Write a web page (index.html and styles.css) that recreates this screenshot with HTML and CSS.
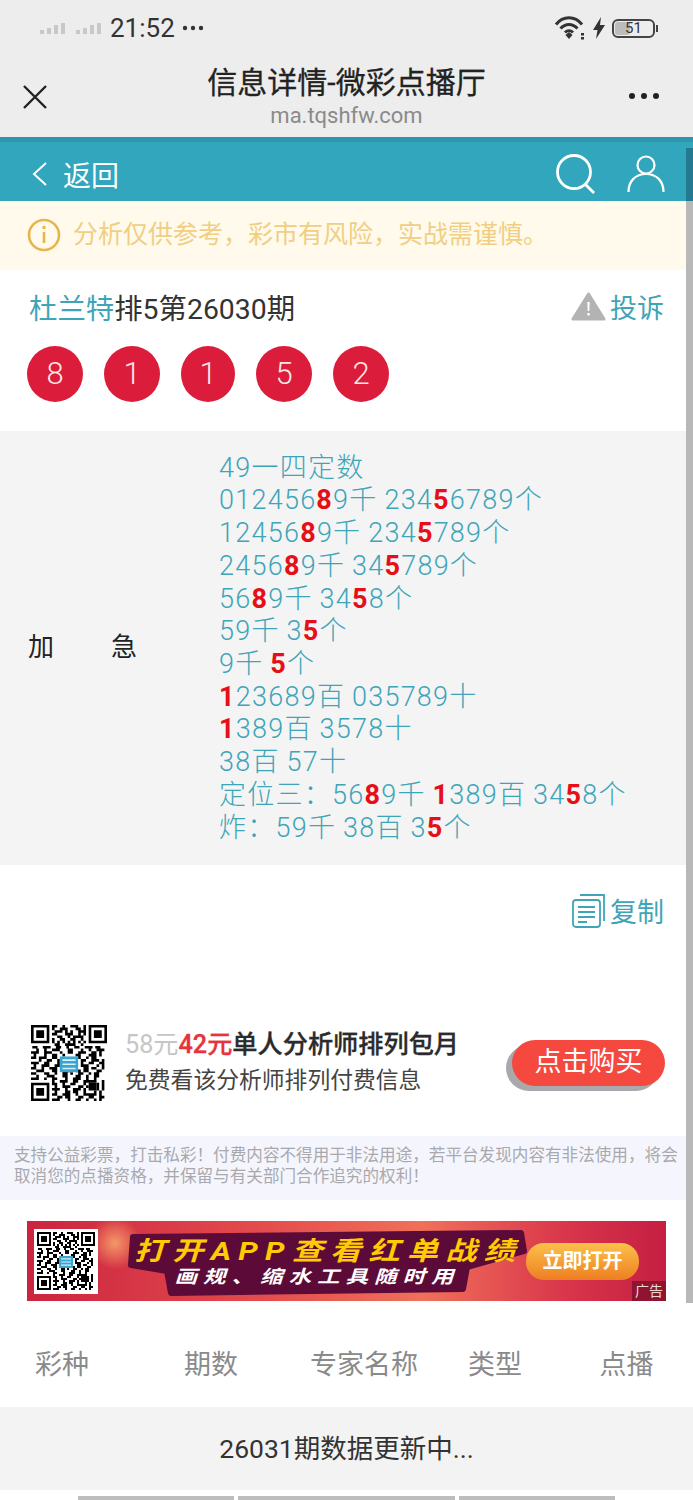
FILE: index.html
```html
<!DOCTYPE html>
<html lang="en">
<head>
  <meta charset="UTF-8">
  <title>信息详情-微彩点播厅</title>
  <link rel="stylesheet" href="styles.css">
</head>
<body>
<svg class="defs" width="0" height="0">
  <symbol id="qr" viewBox="0 0 29 29">
    <path fill="none" stroke="#000" d="M.5 .5h6v6h-6zM22.5 .5h6v6h-6zM.5 22.5h6v6h-6z"/>
    <path d="M2 2h3v3h-3zM24 2h3v3h-3zM2 24h3v3h-3zM22 22h3v3h-3z"/>
    <path fill="none" stroke="#000" d="M8 .5h2m2 0h1m2 0h3m2 0h1M8 1.5h1m2 0h3m3 0h2m1 0h1M9 2.5h3m1 0h1m1 0h1m2 0h3M8 3.5h2m3 0h3m2 0h1m1 0h1M10 4.5h2m2 0h1m1 0h4M8 5.5h1m2 0h2m2 0h2m2 0h1M8 6.5h1m1 0h1m1 0h1m1 0h1m1 0h1m1 0h1m1 0h1M9 7.5h2m2 0h4m2 0h1M.5 8.5h2m2 0h3m2 0h2m2 0h1m2 0h2m2 0h3m1 0h2M2 9.5h1m2 0h1m2 0h3m3 0h2m3 0h1m2 0h1m2 0h3M0 10.5h3m2 0h3m3 0h1m2 0h2m2 0h3m2 0h2m1 0h1M1 11.5h1m3 0h1m2 0h2m2 0h1m4 0h2m3 0h3m1 0h1M0 12.5h2m1 0h3m2 0h2m8 0h1m2 0h1m1 0h2M3 13.5h1m2 0h2m2 0h1m8 0h2m2 0h3m1 0h1M0 14.5h3m2 0h2m3 0h1m8 0h1m2 0h2m2 0h2M1 15.5h1m2 0h3m2 0h2m8 0h3m3 0h1m1 0h1M0 16.5h2m2 0h1m2 0h3m10 0h2m1 0h2m2 0h1M2 17.5h3m3 0h2m2 0h3m2 0h2m1 0h2m3 0h2M0 18.5h2m3 0h2m2 0h1m2 0h2m1 0h1m2 0h2m2 0h1m1 0h2M2 19.5h1m3 0h3m3 0h2m3 0h2m2 0h1m2 0h2M0 20.5h3m2 0h1m2 0h2m3 0h1m2 0h3m2 0h1m2 0h1M8 21.5h1m2 0h3m2 0h2m2 0h5m2 0h1M8 22.5h2m2 0h1m2 0h2m3 0h1m4 0h1m1 0h1M9 23.5h1m2 0h3m3 0h2m1 0h1m3 0h1m1 0h1M8 24.5h3m2 0h1m2 0h3m1 0h1m4 0h1m1 0h1M9 25.5h1m3 0h2m1 0h2m2 0h1m3 0h1m1 0h1M8 26.5h2m2 0h3m2 0h1m2 0h5m1 0h1M10 27.5h2m1 0h2m3 0h2m2 0h2m2 0h2M8 28.5h3m3 0h1m2 0h2m2 0h1m2 0h1m1 0h1"/>
    <rect x="11" y="12" width="7" height="6" fill="#39a6cf"/>
    <path fill="none" stroke="#d6f1fa" stroke-width=".6" d="M12 13.4h5M12 15h5M12 16.6h5"/>
  </symbol>
</svg>

<div class="scrollbar"><div class="thumb-top"></div></div>

<header class="wechat-bar">
  <div class="status">
    <div class="status-left">
      <svg class="signal" width="63" height="12" viewBox="0 0 63 12">
        <path fill="#c8c8c8" d="M0 8h4v4H0zM7 6h4v6H7zM14 3h4v9h-4zM21 1h4v11h-4zM36 8h4v4h-4zM43 6h4v6h-4zM50 3h4v9h-4zM57 1h4v11h-4z"/>
      </svg>
      <span class="clock">21:52</span>
      <svg class="status-dots" width="22" height="6" viewBox="0 0 22 6" fill="#333"><circle cx="3" cy="3" r="2.200"/><circle cx="11" cy="3" r="2.200"/><circle cx="19" cy="3" r="2.200"/></svg>
    </div>
    <div class="status-right">
      <svg width="32" height="24" viewBox="0 0 32 24" fill="none" stroke="#333" stroke-width="3">
        <path d="M2 8.500C9-.5 21-.5 28 8.500M6.500 12.500C11.500 7 18.500 7 23.500 12.500M11 16.500c2.500-2.500 5.500-2.500 8 0"/>
        <path fill="#333" stroke="none" d="M11.500 19l3.500-3 3.500 3-3.500 4zM27 17h3v2.500h-3zM27 21h3v2.500h-3z"/>
      </svg>
      <svg width="12" height="22" viewBox="0 0 12 22"><path fill="#333" d="M8 0L0 13h4.500L3 22l9-14H7z"/></svg>
      <div class="battery"><span class="battery-fill"></span><span class="battery-num">51</span></div>
    </div>
  </div>
  <div class="title-row">
    <svg class="close" width="26" height="26" viewBox="0 0 26 26" fill="none" stroke="#222" stroke-width="2.400"><path d="M2 2l22 22M24 2L2 24"/></svg>
    <div class="title-box">
      <div class="page-title">信息详情-微彩点播厅</div>
      <div class="page-url">ma.tqshfw.com</div>
    </div>
    <svg class="more" width="32" height="8" viewBox="0 0 32 8" fill="#222"><circle cx="4" cy="4" r="3"/><circle cx="16" cy="4" r="3"/><circle cx="28" cy="4" r="3"/></svg>
  </div>
</header>

<nav class="top-nav">
  <div class="back">
    <svg width="17" height="26" viewBox="0 0 17 26" fill="none" stroke="#fff" stroke-width="2"><path d="M15 2L3 13l12 11"/></svg>
    <span>返回</span>
  </div>
  <div class="nav-icons">
    <svg width="42" height="40" viewBox="0 0 42 40" fill="none" stroke="#fff" stroke-width="2.800"><circle cx="19" cy="18" r="16.500"/><path d="M30 30l9 9"/></svg>
    <svg width="38" height="38" viewBox="0 0 38 38" fill="none" stroke="#fff" stroke-width="2.200"><circle cx="19" cy="10" r="8.500"/><path d="M1.500 37c0-11 7-18 17.500-18s17.500 7 17.500 18"/></svg>
  </div>
</nav>

<div class="warn">
  <svg width="34" height="34" viewBox="0 0 34 34" fill="none" stroke="#e9b44c" stroke-width="2.600"><circle cx="17" cy="17" r="15"/><path d="M17 14v11"/><path d="M17 8v3" stroke-width="3"/></svg>
  <span>分析仅供参考，彩市有风险，实战需谨慎。</span>
</div>

<section class="info">
  <div class="info-head">
    <div class="info-title"><span class="teal">杜兰特</span>排5第26030期</div>
    <div class="tool">
      <svg width="35" height="30" viewBox="0 0 35 30"><path fill="#b3b3b3" stroke="#b3b3b3" stroke-width="3" stroke-linejoin="round" d="M17.500 3L2 28h31z"/><path fill="#fff" d="M16.300 11h2.400l-.4 9h-1.600zM16.300 22h2.400v2.500h-2.400z"/></svg>
      <span>投诉</span>
    </div>
  </div>
  <div class="balls">
    <span class="ball">8</span>
    <span class="ball">1</span>
    <span class="ball ball-thin">1</span>
    <span class="ball">5</span>
    <span class="ball">2</span>
  </div>
</section>

<section class="detail">
  <div class="detail-label"><span>加</span><span>急</span></div>
  <div class="detail-text">
    49一四定数<br>
    012456<b>8</b>9千 234<b>5</b>6789个<br>
    12456<b>8</b>9千 234<b>5</b>789个<br>
    2456<b>8</b>9千 34<b>5</b>789个<br>
    56<b>8</b>9千 34<b>5</b>8个<br>
    59千 3<b>5</b>个<br>
    9千 <b>5</b>个<br>
    <b>1</b>23689百 035789十<br>
    <b>1</b>389百 3578十<br>
    38百 57十<br>
    定位三：56<b>8</b>9千 <b>1</b>389百 34<b>5</b>8个<br>
    炸：59千 38百 3<b>5</b>个
  </div>
</section>

<div class="copy-row">
  <div class="tool">
    <svg width="34" height="34" viewBox="0 0 34 34" fill="none" stroke="#3ea5b8" stroke-width="1.800">
      <path d="M8 1h24v26"/>
      <rect x="1" y="6" width="27" height="27" rx="3"/>
      <path d="M6 13h17M6 18h17M6 23h17M6 28h9"/>
    </svg>
    <span>复制</span>
  </div>
</div>

<section class="promo">
  <svg class="promo-qr" width="76" height="76"><use href="#qr"/></svg>
  <div class="promo-text">
    <div class="promo-title"><span class="old-price">58元</span><span class="new-price">42元</span>单人分析师排列包月</div>
    <div class="promo-sub">免费看该分析师排列付费信息</div>
  </div>
  <div class="buy">点击购买</div>
</section>

<p class="legal">支持公益彩票，打击私彩！付费内容不得用于非法用途，若平台发现内容有非法使用，将会取消您的点播资格，并保留与有关部门合作追究的权利！</p>

<div class="banner">
  <div class="banner-qr"><svg width="58" height="58"><use href="#qr"/></svg></div>
  <svg class="banner-blob" width="400" height="80" viewBox="0 0 400 80"><path fill="#5c0a38" stroke="#5c0a38" stroke-width="6" stroke-linejoin="round" d="M6 16L394 12l3 18-57 16-4 22-292 4-4-22-36-6z"/></svg>
  <div class="banner-text">
    <div class="banner-main">打开APP查看红单战绩</div>
    <div class="banner-sub">画规、缩水工具随时用</div>
  </div>
  <div class="banner-btn">立即打开</div>
  <span class="banner-ad">广告</span>
</div>

<div class="table-head">
  <span>彩种</span><span>期数</span><span>专家名称</span><span>类型</span><span>点播</span>
</div>
<div class="table-empty">26031期数据更新中...</div>
<div class="table-foot"><i class="foot-a"></i><i class="foot-b"></i><i class="foot-a"></i></div>

</body>
</html>
```

FILE: styles.css
```css
body, p {
  margin: 0;
  padding: 0;
}

body {
  position: relative;
  width: 693px;
  height: 1500px;
  overflow: hidden;
  background: #fff;
  font-family: Roboto, "Noto Sans CJK SC", sans-serif;
  color: #333;
}

svg {
  display: block;
  flex: none;
}

.defs {
  position: absolute;
}

.teal {
  color: #3ea5b8;
}

/* scrollbar lies over the page */
.scrollbar {
  position: absolute;
  right: 0;
  top: 148px;
  width: 7px;
  height: 1155px;
  background: #b8b8b8;
  z-index: 5;
}

.thumb-top {
  height: 53px;
  background: #24788f;
}

/* wechat bar */
.wechat-bar {
  height: 137px;
  background: #ededed;
}

.status {
  height: 56px;
  padding: 0 38px 0 40px;
  display: flex;
  justify-content: space-between;
  align-items: center;
}

.status-left,
.status-right {
  display: flex;
  align-items: center;
}

.clock {
  margin-left: 7px;
  font-size: 26px;
  color: #333;
}

.status-dots {
  margin-left: 7px;
}

.status-right {
  gap: 7px;
}

.battery {
  position: relative;
  width: 43px;
  height: 19px;
  border: 2px solid #444;
  border-radius: 6px;
  box-sizing: border-box;
}

.battery:after {
  content: "";
  position: absolute;
  right: -5px;
  top: 4px;
  width: 2px;
  height: 7px;
  background: #444;
}

.battery-fill {
  position: absolute;
  left: 1px;
  top: 1px;
  bottom: 1px;
  width: 15px;
  background: #bcbcbc;
  border-radius: 3px;
}

.battery-num {
  position: absolute;
  left: 0;
  right: 0;
  top: -3px;
  text-align: center;
  font-size: 15px;
  line-height: 20px;
  color: #333;
}

.title-row {
  height: 81px;
  padding: 0 22px;
  display: grid;
  grid-template-columns: 1fr auto 1fr;
  align-items: start;
}

.close {
  margin-top: 28px;
}

.more {
  margin: 36px 11px 0 0;
  justify-self: end;
}

.title-box {
  text-align: center;
}

.page-title {
  font-size: 30px;
  line-height: 42px;
  margin-top: 6px;
  color: #222;
  -webkit-text-stroke: .3px #222;
}

.page-url {
  font-size: 22px;
  line-height: 24px;
  color: #8a8a8a;
}

/* teal nav */
.top-nav {
  height: 64px;
  box-sizing: border-box;
  padding: 5px 28px 0 31px;
  background: #32a6bd;
  border-top: 5px solid #2c97ad;
  display: flex;
  justify-content: space-between;
  align-items: center;
  color: #fff;
}

.back {
  display: flex;
  align-items: center;
  gap: 15px;
  font-size: 28px;
}

.nav-icons {
  display: flex;
  align-items: center;
  gap: 30px;
}

.warn {
  height: 69px;
  box-sizing: border-box;
  padding: 0 0 2px 27px;
  background: #fffaec;
  display: flex;
  align-items: center;
  gap: 12px;
  font-size: 25px;
  color: #f0cf83;
}

.warn span {
  margin-top: -5px;
}

/* info */
.info {
  height: 161px;
  padding: 0 29px 0 27px;
}

.info-head {
  height: 76px;
  box-sizing: border-box;
  padding-bottom: 4px;
  display: flex;
  justify-content: space-between;
  align-items: center;
}

.info-title {
  margin-left: 2px;
  font-size: 28.4px;
}

.tool {
  display: flex;
  align-items: center;
  gap: 4px;
  font-size: 27px;
  color: #3ea5b8;
}

.balls {
  display: flex;
  gap: 21px;
}

.ball {
  width: 56px;
  height: 56px;
  border-radius: 50%;
  background: #db1c3a;
  color: #fbe6e8;
  font-size: 31px;
  font-weight: 300;
  line-height: 56px;
  text-align: center;
}

.ball-thin {
  width: 54px;
}

.detail {
  height: 434px;
  box-sizing: border-box;
  padding-left: 28px;
  background: #f4f4f5;
  display: flex;
  align-items: center;
}

.detail-label {
  width: 109px;
  margin-right: 82px;
  margin-top: -8px;
  display: flex;
  justify-content: space-between;
  font-size: 26px;
  color: #222;
}

.detail-text {
  font-size: 27px;
  font-weight: 300;
  letter-spacing: 1.25px;
  word-spacing: -1px;
  line-height: 32.7px;
  color: #3ea5b8;
  white-space: nowrap;
}

.detail-text b {
  color: #e60f17;
  font-weight: 700;
}

.copy-row {
  height: 93px;
  padding: 26px 29px 0 0;
  box-sizing: border-box;
  display: flex;
  justify-content: flex-end;
  align-items: flex-start;
}

.promo {
  height: 178px;
  box-sizing: border-box;
  padding: 67px 27px 0 31px;
  display: flex;
}

.promo-qr {
  margin-right: 18px;
}

.promo-text {
  width: 388px;
}

.promo-title {
  font-size: 25.2px;
  line-height: 39px;
  font-weight: 500;
  color: #2b2b2b;
  -webkit-text-stroke: .3px #2b2b2b;
}

.old-price {
  color: #c6c6c6;
  -webkit-text-stroke: 0;
  font-weight: 400;
}

.new-price {
  color: #e8323c;
  -webkit-text-stroke: .3px #e8323c;
}

.promo-sub {
  font-size: 22.8px;
  line-height: 34px;
  color: #444;
}

.buy {
  width: 153px;
  height: 46px;
  margin-top: 15px;
  margin-left: -1px;
  flex: none;
  border-radius: 23px;
  background: #f5483f;
  box-shadow: -6px 5px 0 #a9a9ad;
  color: #fff;
  font-size: 27px;
  line-height: 44px;
  text-align: center;
}

.legal {
  height: 64px;
  box-sizing: border-box;
  padding: 9px 14px 0;
  background: #f5f6fd;
  font-size: 16.6px;
  line-height: 21px;
  color: #a9a9ad;
}

/* banner */
.banner {
  position: relative;
  width: 639px;
  height: 80px;
  margin: 21px 0 0 27px;
  background:
    radial-gradient(circle at 88px 22px, rgba(250, 170, 110, .85) 0, rgba(250, 170, 110, 0) 26px),
    linear-gradient(90deg, #cb2440 0%, #e24a4c 35%, #f0705a 62%, #d8344a 85%, #c51f42 100%);
  display: flex;
  align-items: center;
  overflow: hidden;
}

.banner-qr {
  width: 64px;
  height: 65px;
  margin-left: 7px;
  background: #fff;
  display: flex;
  align-items: center;
  justify-content: center;
  flex: none;
}

.banner-blob {
  position: absolute;
  left: 100px;
  top: 0;
}

.banner-text {
  position: relative;
  width: 396px;
  margin-left: 32px;
  text-align: center;
}

/* the ad's lettering is wider than it is tall */
.banner-main {
  font-size: 26px;
  line-height: 30px;
  margin-top: 1px;
  font-weight: 700;
  font-style: italic;
  letter-spacing: 6px;
  color: #ffcb05;
  white-space: nowrap;
  transform: scaleX(1.2);
}

.banner-sub {
  font-size: 18px;
  line-height: 21px;
  font-weight: 700;
  font-style: italic;
  letter-spacing: 4.8px;
  color: #fff;
  white-space: nowrap;
  margin-left: -22px;
  transform: scaleX(1.25);
}

.banner-btn {
  width: 113px;
  height: 37px;
  flex: none;
  border-radius: 18px;
  background: linear-gradient(#fcc14a, #ee7e22);
  color: #fff;
  font-size: 20px;
  font-weight: 700;
  line-height: 36px;
  text-align: center;
}

.banner-ad {
  position: absolute;
  right: 0;
  bottom: 0;
  width: 34px;
  height: 20px;
  background: #8f1430;
  color: #f4d6d6;
  font-size: 14px;
  line-height: 20px;
  text-align: center;
}

/* table */
.table-head {
  height: 106px;
  display: grid;
  grid-template-columns: 124px 174px 132px 130px 133px;
  align-items: center;
  padding-top: 17px;
  box-sizing: border-box;
  text-align: center;
  font-size: 27px;
  color: #8a8a8a;
}

.table-empty {
  height: 83px;
  background: #f3f3f3;
  font-size: 26.5px;
  line-height: 84px;
  text-align: center;
  color: #333;
}

.table-foot {
  height: 10px;
  padding: 6px 0 0 78px;
  box-sizing: border-box;
  display: flex;
  gap: 4px;
}

.table-foot i {
  height: 4px;
  background: #bdbdbd;
}

.foot-a {
  width: 156px;
}

.foot-b {
  width: 217px;
}
```
